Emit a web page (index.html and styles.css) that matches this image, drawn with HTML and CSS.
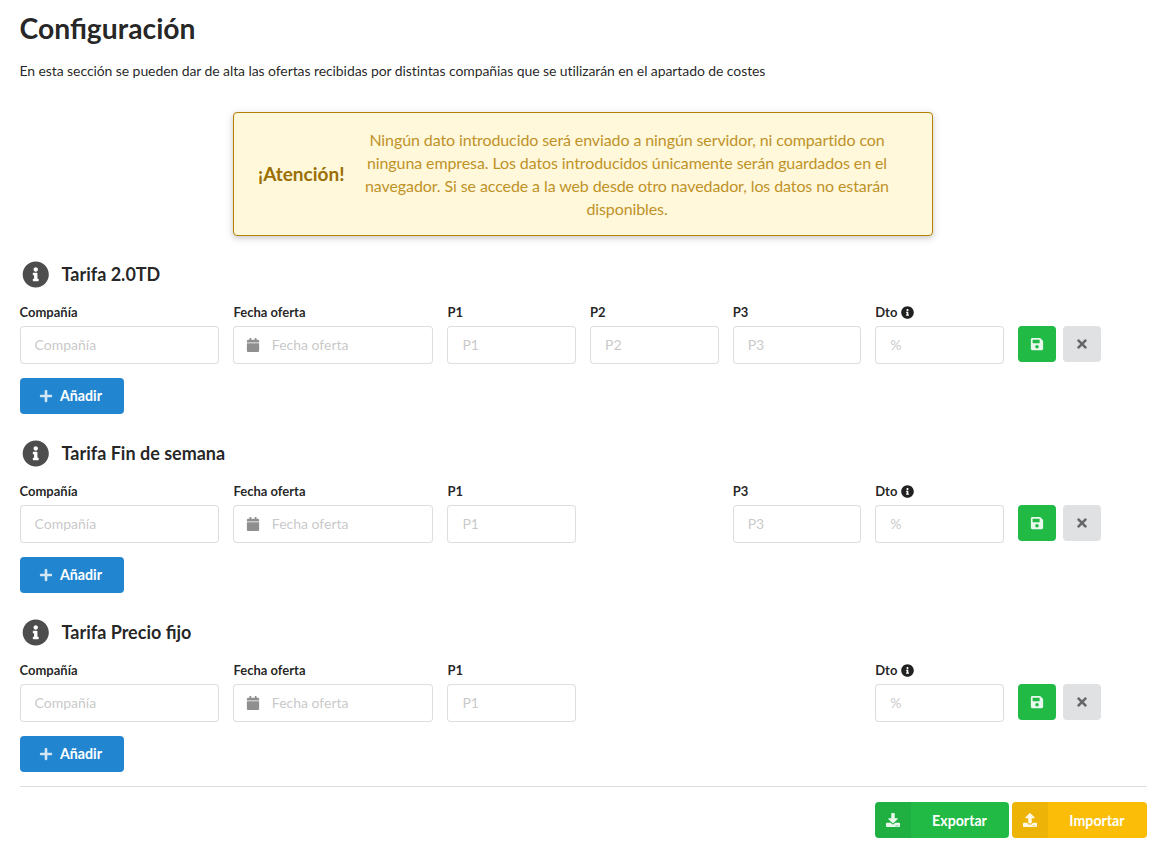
FILE: index.html
```html
<!DOCTYPE html>
<html lang="es">
<head>
<meta charset="utf-8">
<title>Configuración</title>
<link rel="stylesheet" href="styles.css">
</head>
<body>
<svg class="sprite" aria-hidden="true">
  <symbol id="info" viewBox="0 0 512 512"><path d="M256 8C119.043 8 8 119.083 8 256c0 136.997 111.043 248 248 248s248-111.003 248-248C504 119.083 392.957 8 256 8zm0 110c23.196 0 42 18.804 42 42s-18.804 42-42 42-42-18.804-42-42 18.804-42 42-42zm56 254c0 6.627-5.373 12-12 12h-88c-6.627 0-12-5.373-12-12v-24c0-6.627 5.373-12 12-12h12v-64h-12c-6.627 0-12-5.373-12-12v-24c0-6.627 5.373-12 12-12h64c6.627 0 12 5.373 12 12v100h12c6.627 0 12 5.373 12 12v24z"/></symbol>
  <symbol id="calendar" viewBox="0 0 448 512"><path d="M12 192h424c6.600 0 12 5.400 12 12v260c0 26.500-21.500 48-48 48H48c-26.500 0-48-21.500-48-48V204c0-6.600 5.400-12 12-12zm436-44v-36c0-26.500-21.500-48-48-48h-48V12c0-6.600-5.400-12-12-12h-40c-6.600 0-12 5.400-12 12v52H160V12c0-6.600-5.400-12-12-12h-40c-6.600 0-12 5.400-12 12v52H48C21.500 64 0 85.500 0 112v36c0 6.600 5.400 12 12 12h424c6.600 0 12-5.400 12-12z"/></symbol>
  <symbol id="save" viewBox="0 0 448 512"><path d="M433.941 129.941l-83.882-83.882A48 48 0 0 0 316.118 32H48C21.490 32 0 53.490 0 80v352c0 26.510 21.490 48 48 48h352c26.510 0 48-21.490 48-48V163.882a48 48 0 0 0-14.059-33.941zM224 416c-35.346 0-64-28.654-64-64 0-35.346 28.654-64 64-64s64 28.654 64 64c0 35.346-28.654 64-64 64zm96-304.520V212c0 6.627-5.373 12-12 12H76c-6.627 0-12-5.373-12-12V108c0-6.627 5.373-12 12-12h228.520c3.183 0 6.235 1.264 8.485 3.515l3.480 3.480A11.996 11.996 0 0 1 320 111.480z"/></symbol>
  <symbol id="times" viewBox="0 0 352 512"><path d="M242.720 256l100.070-100.070c12.280-12.280 12.280-32.190 0-44.480l-22.240-22.240c-12.280-12.280-32.190-12.280-44.480 0L176 189.280 75.930 89.210c-12.280-12.280-32.190-12.280-44.480 0L9.210 111.450c-12.280 12.280-12.280 32.190 0 44.480L109.280 256 9.210 356.070c-12.280 12.280-12.280 32.190 0 44.480l22.240 22.240c12.280 12.280 32.200 12.280 44.480 0L176 322.720l100.070 100.070c12.280 12.280 32.200 12.280 44.480 0l22.240-22.240c12.280-12.280 12.280-32.190 0-44.480L242.720 256z"/></symbol>
  <symbol id="plus" viewBox="0 0 448 512"><path d="M416 208H272V64c0-17.670-14.330-32-32-32h-32c-17.670 0-32 14.330-32 32v144H32c-17.670 0-32 14.330-32 32v32c0 17.670 14.330 32 32 32h144v144c0 17.670 14.330 32 32 32h32c17.670 0 32-14.330 32-32V304h144c17.670 0 32-14.330 32-32v-32c0-17.670-14.330-32-32-32z"/></symbol>
  <symbol id="download" viewBox="0 0 512 512"><path d="M216 0h80c13.300 0 24 10.700 24 24v168h87.700c17.800 0 26.700 21.500 14.100 34.100L269.700 378.300c-7.500 7.500-19.800 7.500-27.300 0L90.100 226.100c-12.600-12.600-3.700-34.100 14.100-34.100H192V24c0-13.300 10.700-24 24-24zm296 376v112c0 13.300-10.700 24-24 24H24c-13.300 0-24-10.700-24-24V376c0-13.300 10.700-24 24-24h146.700l49 49c20.100 20.100 52.500 20.100 72.600 0l49-49H488c13.300 0 24 10.700 24 24zm-124 88c0-11-9-20-20-20s-20 9-20 20 9 20 20 20 20-9 20-20zm64 0c0-11-9-20-20-20s-20 9-20 20 9 20 20 20 20-9 20-20z"/></symbol>
  <symbol id="upload" viewBox="0 0 512 512"><path d="M296 384h-80c-13.300 0-24-10.700-24-24V192h-87.700c-17.800 0-26.700-21.500-14.100-34.100L242.300 5.700c7.500-7.500 19.800-7.500 27.300 0l152.200 152.200c12.600 12.600 3.700 34.100-14.100 34.100H320v168c0 13.300-10.700 24-24 24zm216-8v112c0 13.300-10.700 24-24 24H24c-13.300 0-24-10.700-24-24V376c0-13.300 10.700-24 24-24h136v8c0 30.900 25.100 56 56 56h80c30.900 0 56-25.100 56-56v-8h136c13.300 0 24 10.700 24 24zm-124 88c0-11-9-20-20-20s-20 9-20 20 9 20 20 20 20-9 20-20zm64 0c0-11-9-20-20-20s-20 9-20 20 9 20 20 20 20-9 20-20z"/></symbol>
</svg>
<main class="page">
  <h1 class="title">Configuración</h1>
  <p class="intro">En esta sección se pueden dar de alta las ofertas recibidas por distintas compañias que se utilizarán en el apartado de costes</p>

  <div class="notice">
    <strong class="notice-title">¡Atención!</strong>
    <p class="notice-text">Ningún dato introducido será enviado a ningún servidor, ni compartido con ninguna empresa. Los datos introducidos únicamente serán guardados en el navegador. Si se accede a la web desde otro navedador, los datos no estarán disponibles.</p>
  </div>

  <section class="tariff">
    <h3 class="tariff-title"><svg class="icon"><use href="#info"/></svg>Tarifa 2.0TD</h3>
    <div class="fields">
      <label class="field wide">Compañía<input placeholder="Compañía"></label>
      <label class="field wide">Fecha oferta<span class="dated"><svg class="icon"><use href="#calendar"/></svg><input placeholder="Fecha oferta"></span></label>
      <label class="field">P1<input placeholder="P1"></label>
      <label class="field">P2<input placeholder="P2"></label>
      <label class="field">P3<input placeholder="P3"></label>
      <label class="field"><span class="hinted">Dto <svg class="icon"><use href="#info"/></svg></span><input placeholder="%"></label>
      <div class="actions"><button class="square save"><svg class="icon"><use href="#save"/></svg></button><button class="square remove"><svg class="icon"><use href="#times"/></svg></button></div>
    </div>
    <button class="add"><svg class="icon"><use href="#plus"/></svg>Añadir</button>
  </section>

  <section class="tariff">
    <h3 class="tariff-title"><svg class="icon"><use href="#info"/></svg>Tarifa Fin de semana</h3>
    <div class="fields">
      <label class="field wide">Compañía<input placeholder="Compañía"></label>
      <label class="field wide">Fecha oferta<span class="dated"><svg class="icon"><use href="#calendar"/></svg><input placeholder="Fecha oferta"></span></label>
      <label class="field">P1<input placeholder="P1"></label>
      <div class="field"></div>
      <label class="field">P3<input placeholder="P3"></label>
      <label class="field"><span class="hinted">Dto <svg class="icon"><use href="#info"/></svg></span><input placeholder="%"></label>
      <div class="actions"><button class="square save"><svg class="icon"><use href="#save"/></svg></button><button class="square remove"><svg class="icon"><use href="#times"/></svg></button></div>
    </div>
    <button class="add"><svg class="icon"><use href="#plus"/></svg>Añadir</button>
  </section>

  <section class="tariff">
    <h3 class="tariff-title"><svg class="icon"><use href="#info"/></svg>Tarifa Precio fijo</h3>
    <div class="fields">
      <label class="field wide">Compañía<input placeholder="Compañía"></label>
      <label class="field wide">Fecha oferta<span class="dated"><svg class="icon"><use href="#calendar"/></svg><input placeholder="Fecha oferta"></span></label>
      <label class="field">P1<input placeholder="P1"></label>
      <div class="field"></div>
      <div class="field"></div>
      <label class="field"><span class="hinted">Dto <svg class="icon"><use href="#info"/></svg></span><input placeholder="%"></label>
      <div class="actions"><button class="square save"><svg class="icon"><use href="#save"/></svg></button><button class="square remove"><svg class="icon"><use href="#times"/></svg></button></div>
    </div>
    <button class="add"><svg class="icon"><use href="#plus"/></svg>Añadir</button>
  </section>

  <footer class="footer">
    <button class="labeled export"><span class="tab"><svg class="icon"><use href="#download"/></svg></span><span class="caption">Exportar</span></button>
    <button class="labeled import"><span class="tab"><svg class="icon"><use href="#upload"/></svg></span><span class="caption">Importar</span></button>
  </footer>
</main>
</body>
</html>
```

FILE: styles.css
```css
* { box-sizing: border-box; }

body {
  margin: 0;
  background: #fff;
  color: rgba(0, 0, 0, .87);
  font: 14px/20px Lato, "Liberation Sans", sans-serif;
}

.sprite { display: none; }

.icon { display: block; fill: currentColor; flex: none; }

.page { padding: 10px 14.5px 0 19.5px; }

.title { margin: 0; font-size: 28.300px; line-height: 36px; font-weight: 700; }

.intro { margin: 15px 0 0; line-height: 20px; letter-spacing: -.085px; }

.notice {
  display: flex;
  align-items: center;
  width: 700px;
  height: 124px;
  margin: 31px auto 0;
  padding: 0 24px;
  border: 1px solid #b58105;
  border-radius: 4px;
  background: #fff8db;
  box-shadow: 0 2px 4px rgba(34, 36, 38, .12), 0 2px 10px rgba(34, 36, 38, .15);
  color: #b58105;
}

.notice-title { width: 87px; font-size: 19px; color: #9b6f03; white-space: nowrap; }

.notice-text {
  width: 532px;
  margin: 0 0 0 16px;
  font-size: 16px;
  line-height: 23px;
  letter-spacing: -.1px;
  text-align: center;
  opacity: .85;
}

.tariff { height: 179px; padding-top: 22px; }

.tariff-title {
  display: flex;
  align-items: center;
  gap: 10.5px;
  height: 32px;
  margin: 0;
  font-size: 18px;
  line-height: 23px;
}

.tariff-title .icon { width: 31.500px; height: 27px; opacity: .8; }

.fields {
  display: grid;
  grid-template-columns: 3fr 3fr 2fr 2fr 2fr 2fr 2fr;
  margin: 12px -7px 0;
}

.field { padding: 0 7px; font-size: 13px; font-weight: 700; line-height: 20px; }

.field input {
  display: block;
  width: 100%;
  height: 38px;
  margin-top: 4px;
  padding: 0 14px 2px;
  border: 1px solid rgba(34, 36, 38, .15);
  border-radius: 4px;
  background: #fff;
  font: 14px/17px Lato, sans-serif;
}

.field input::placeholder { color: rgba(191, 191, 191, .87); opacity: 1; }

.hinted { display: flex; align-items: center; gap: 4px; }
.hinted .icon { width: 13px; height: 13px; }

.dated { display: block; position: relative; }
.field .dated input { padding-left: 37.400px; }
.dated .icon { position: absolute; left: 13px; top: 12px; width: 14px; height: 14px; opacity: .5; }

.actions { display: flex; gap: 7px; padding: 24px 0 0 7px; }

button { border: 0; border-radius: 4px; padding: 0; font: 700 14.200px/14px Lato, sans-serif; }

.square { display: flex; align-items: center; justify-content: center; width: 38px; height: 36px; }
.square .icon { width: 14px; height: 14px; opacity: .9; }

.save { background: #21ba45; color: #fff; }
.remove { background: #e0e1e2; color: rgba(0, 0, 0, .6); }

.add {
  display: flex;
  align-items: center;
  width: 104px;
  height: 36px;
  margin-top: 14px;
  padding-left: 19px;
  gap: 7.500px;
  background: #2185d0;
  color: #fff;
}

.add .icon { width: 14px; height: 14px; opacity: .8; }

.footer {
  display: flex;
  justify-content: flex-end;
  gap: 3px;
  margin-top: 13px;
  padding-top: 15px;
  border-top: 1px solid rgba(34, 36, 38, .15);
}

.labeled { display: flex; height: 36px; overflow: hidden; color: #fff; }
.export { width: 134px; background: #21ba45; }
.import { width: 135px; background: #fbbd08; }
.tab { display: flex; align-items: center; justify-content: center; width: 36px; height: 36px; background: rgba(0, 0, 0, .05); }
.tab .icon { width: 14px; height: 14px; opacity: .9; }
.caption { flex: 1; line-height: 38px; text-align: center; }
```
